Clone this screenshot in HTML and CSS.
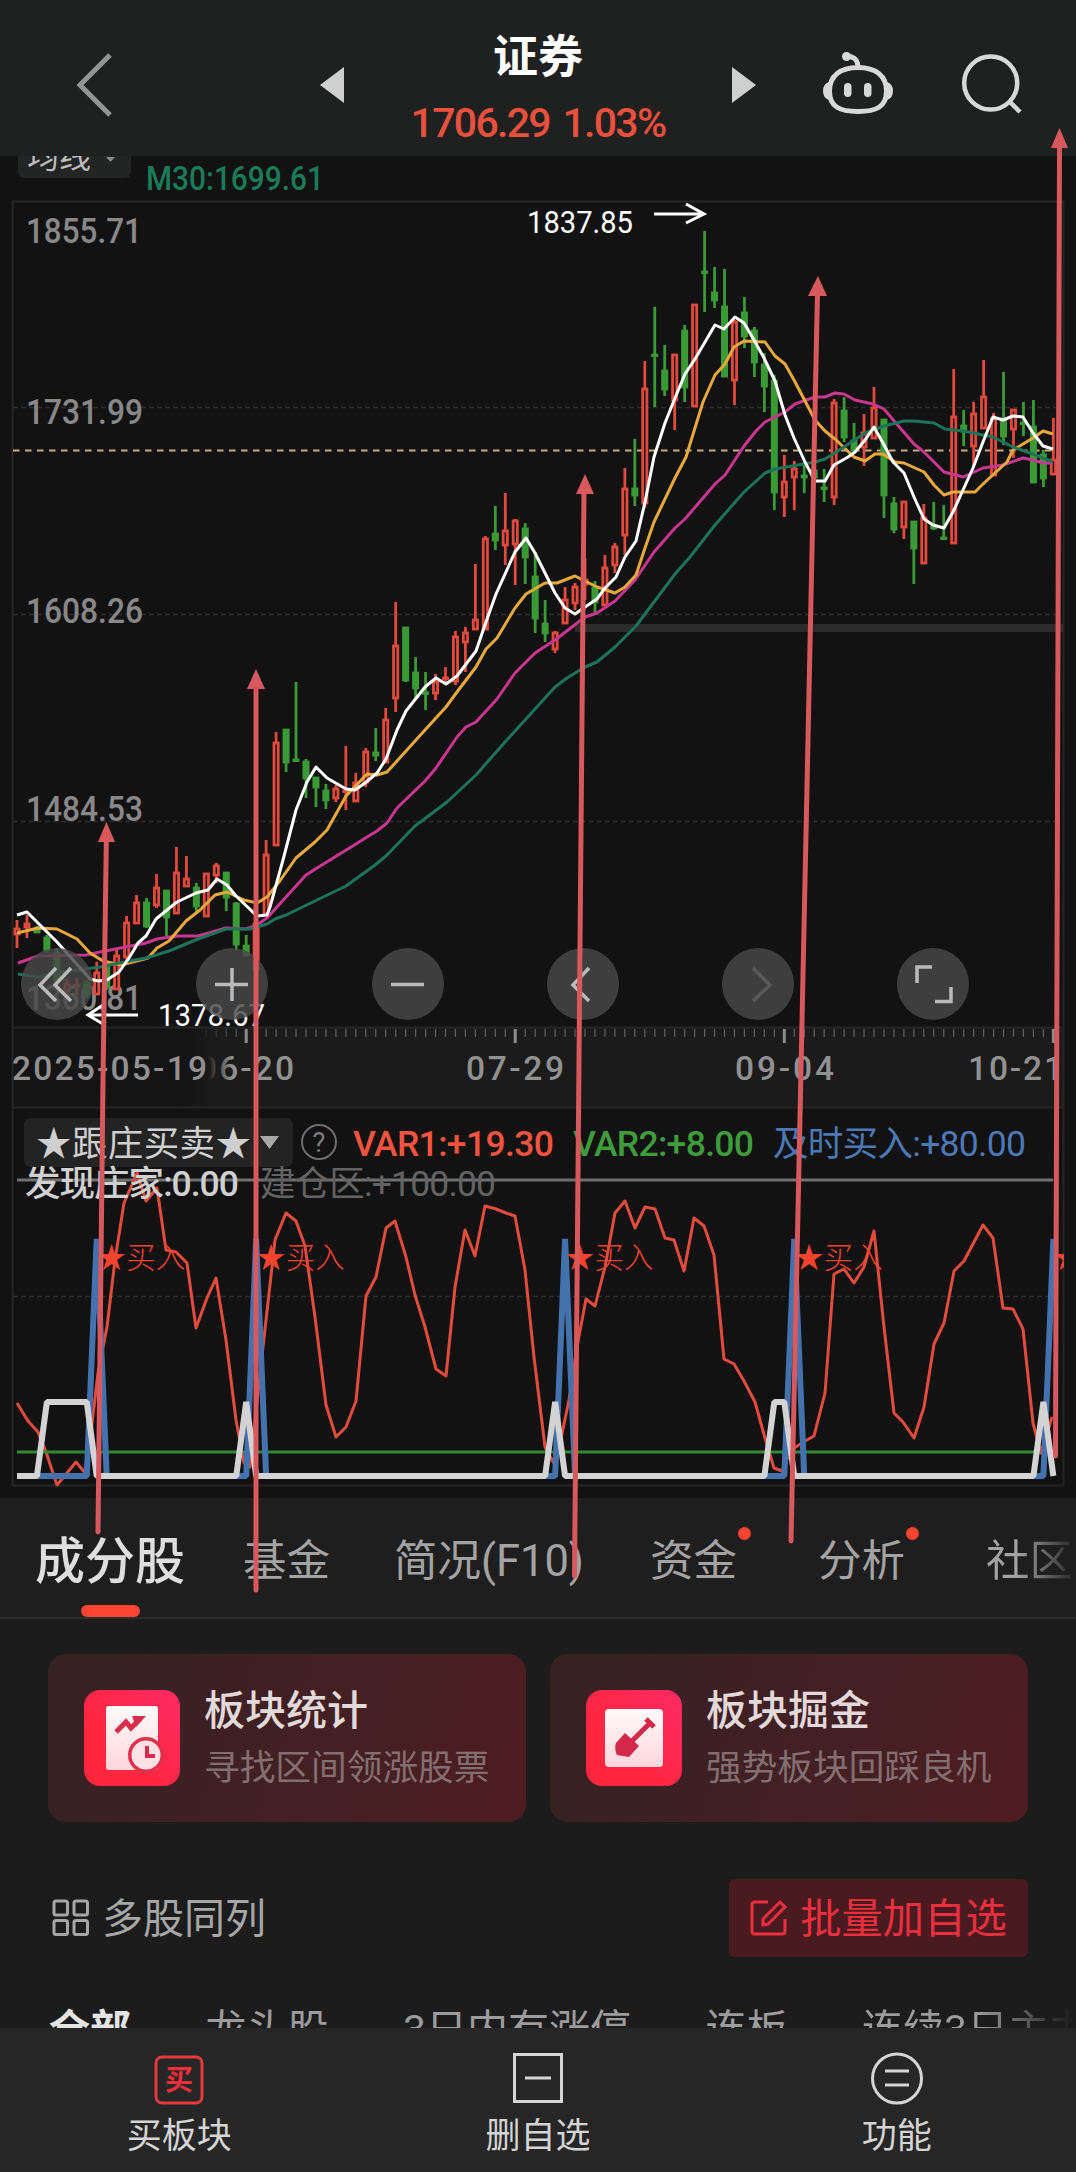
FILE: index.html
```
<!DOCTYPE html>
<html lang="zh-CN">
<head>
    <meta charset="UTF-8">
    <meta name="viewport" content="width=device-width, initial-scale=1.0">
    <title>证券 板块行情</title>
    <link rel="stylesheet" href="styles.css">
</head>
<body>
    <header class="top-bar">
        <svg class="back" width="40" height="66" viewBox="0 0 40 66"><path d="M35 3L5 33L35 63"/></svg>
        <svg class="switch" width="24" height="36" viewBox="0 0 24 36"><path d="M24 0V36L0 18Z"/></svg>
        <div class="quote">
            <h1>证券</h1>
            <div class="price">1706.29 1.03%</div>
        </div>
        <svg class="switch" width="24" height="36" viewBox="0 0 24 36"><path d="M0 0V36L24 18Z"/></svg>
        <svg class="robot" width="70" height="66" viewBox="823 50 70 66">
            <path d="M858 67.500C876 67.500 886.500 76 886.500 91C886.500 107 876 111.500 858 111.500C840 111.500 829.500 107 829.500 91C829.500 76 840 67.500 858 67.500Z"/>
            <path d="M858 68C858 60 855 57 847 56"/>
            <circle class="fill" cx="846.5" cy="56.5" r="4.5"/>
            <path class="fill" d="M829 82q-6 2-6 9t6 9zM887 82q6 2 6 9t-6 9z"/>
            <rect class="fill" x="844" y="83" width="7.5" height="14" rx="3.7"/>
            <rect class="fill" x="864" y="83" width="7.5" height="14" rx="3.7"/>
        </svg>
        <svg class="search" width="62" height="62" viewBox="961 53 62 62"><circle cx="990.7" cy="83" r="26.5"/><path d="M1009 101L1020 112"/></svg>
    </header>

    <section class="chart">
        <svg id="chart" width="1076" height="1342" viewBox="0 156 1076 1342">
            <!-- average line selector, partly scrolled under the header -->
            <rect x="18" y="140" width="113" height="38" rx="6" fill="#232424"/>
            <text x="27" y="168" class="cjk" font-size="32" fill="#bdbdbd">均线</text>
            <path d="M106 157h9l-4.500 5z" fill="#8a8a8a"/>
            <text x="146" y="190" font-size="34" font-weight="500" fill="#1a7b58" textLength="178" lengthAdjust="spacingAndGlyphs">M30:1699.61</text>

            <rect x="13" y="1028" width="1050" height="79" fill="#1b1b1b"/>
            <rect x="13" y="1028" width="200" height="82" fill="url(#fade)"/>
            <defs>
                <linearGradient id="fade"><stop offset="0.3" stop-color="#141414"/><stop offset="0.85" stop-color="#131313"/><stop offset="1" stop-color="#131313" stop-opacity="0"/></linearGradient>
                <clipPath id="panel"><rect x="13" y="1108" width="1051" height="378"/></clipPath>
                <linearGradient id="dateFade"><stop offset="0.1" stop-color="#919191" stop-opacity="0"/><stop offset="0.35" stop-color="#919191"/></linearGradient>
            </defs>

            <g class="frame">
                <path d="M12 201.500H1064M12 1027.500H1064M12 1107.500H1064M12 1485.500H1064M12.500 201V1486M1063.500 201V1486"/>
            </g>
            <path class="grid" d="M13 407.500H1056M13 614.500H1056M13 821.500H1056M13 1296.500H1058"/>
            <rect x="575" y="624" width="489" height="8" fill="#2b2b2b"/>

            <g class="scale">
                <text x="26" y="243" textLength="116" lengthAdjust="spacingAndGlyphs">1855.71</text>
                <text x="26" y="424" textLength="117" lengthAdjust="spacingAndGlyphs">1731.99</text>
                <text x="26" y="623" textLength="117" lengthAdjust="spacingAndGlyphs">1608.26</text>
                <text x="26" y="821" textLength="117" lengthAdjust="spacingAndGlyphs">1484.53</text>
                <text x="26" y="1010" textLength="116" lengthAdjust="spacingAndGlyphs">1360.81</text>
            </g>
            <path d="M13 450.500H1056" stroke="#c9ab7c" stroke-width="2" stroke-dasharray="6.500 5.500"/>

            <g id="candles"></g>
            <g id="averages"></g>

            <g class="peak">
                <text x="527" y="233" textLength="106" lengthAdjust="spacingAndGlyphs">1837.85</text>
                <path d="M654 214H703M686 204L704 214L686 223"/>
                <text x="158" y="1026" textLength="107" lengthAdjust="spacingAndGlyphs">1378.67</text>
                <path d="M138 1015H88M103 1005L88 1015L103 1024"/>
            </g>

            <g id="ticks"></g>
            <g class="dates">
                <text x="12" y="1080" textLength="195">2025-05-19</text>
                <text x="198" y="1080" textLength="96" fill="url(#dateFade)">06-20</text>
                <text x="466" y="1080" textLength="98">07-29</text>
                <text x="735" y="1080" textLength="99">09-04</text>
                <text x="968" y="1080" textLength="95">10-21</text>
            </g>

            <g clip-path="url(#panel)">
                <path d="M17 1180H1053" stroke="#707070" stroke-width="3"/>
                <g id="indicator"></g>
                <g id="signals"></g>
            </g>

            <rect x="24" y="1118" width="269" height="49" rx="7" fill="#232323"/>
            <g class="legend">
                <text x="36" y="1156" fill="#cfcfcf" textLength="215">★跟庄买卖★</text>
                <path d="M260 1136H279L269.500 1149Z" fill="#a8a8a8"/>
                <circle cx="319" cy="1142" r="17" fill="none" stroke="#6e6e6e" stroke-width="2"/>
                <text x="319" y="1152" font-size="27" text-anchor="middle" fill="#7c7c7c">?</text>
                <text x="353" y="1156" class="bold" fill="#f2543f" textLength="201">VAR1:+19.30</text>
                <text x="573" y="1156" class="bold" fill="#3f9c3b" textLength="181">VAR2:+8.00</text>
                <text x="773" y="1156" fill="#4c79b6" textLength="253">及时买入:+80.00</text>
                <text x="25" y="1196" class="bold" fill="#d0d0d0" textLength="214">发现庄家:0.00</text>
                <text x="260" y="1196" fill="#636363" textLength="236">建仓区:+100.00</text>
            </g>
        </svg>
        <div class="tools">
            <button><svg viewBox="0 0 72 72"><path d="M35 20L19 37L35 53M50 20L34 37L50 53"/></svg></button>
            <button><svg viewBox="0 0 72 72"><path d="M36 20V53M19 36.500H52"/></svg></button>
            <button><svg viewBox="0 0 72 72"><path d="M19 36.500H52"/></svg></button>
            <button><svg viewBox="0 0 72 72"><path d="M42 20L26 37L42 53"/></svg></button>
            <button class="disabled"><svg viewBox="0 0 72 72"><path d="M31 20L48 37L31 53"/></svg></button>
            <button><svg viewBox="0 0 72 72"><path d="M35 19H20V35M54 39V53.500H38"/></svg></button>
        </div>
    </section>

    <nav class="tabs">
        <a class="active">成分股</a>
        <a>基金</a>
        <a>简况(F10)</a>
        <a class="dot">资金</a>
        <a class="dot">分析</a>
        <a class="cut">社区</a>
    </nav>

    <main>
        <div class="cards">
            <div class="card">
                <svg width="96" height="96" viewBox="0 0 96 96">
                    <defs>
                        <linearGradient id="red" x1="0" y1="1" x2="1" y2="0"><stop offset="0.3" stop-color="#ff263d"/><stop offset="1" stop-color="#fb2a63"/></linearGradient>
                        <linearGradient id="paper" x2="0" y2="1"><stop offset="0" stop-color="#fffafa"/><stop offset="1" stop-color="#ffd6dc"/></linearGradient>
                    </defs>
                    <rect width="96" height="96" rx="16" fill="url(#red)"/>
                    <rect x="22" y="16" width="52" height="64" rx="3" fill="url(#paper)"/>
                    <path d="M32 42L42 32L47 38L56 29" fill="none" stroke="#d92c4a" stroke-width="5"/>
                    <path d="M48 26H62L52 37Z" fill="#d92c4a"/>
                    <circle cx="62" cy="65" r="16" fill="#ffe1e5" stroke="#e0304b" stroke-width="4"/>
                    <path d="M73 46A20 20 0 0 1 73 82H80V46Z" fill="#ff2749"/>
                    <circle cx="62" cy="65" r="14.500" fill="#ffe1e5"/>
                    <path d="M63 56V66H71" fill="none" stroke="#d92c4a" stroke-width="4"/>
                </svg>
                <div class="card-text">
                    <h2>板块统计</h2>
                    <p>寻找区间领涨股票</p>
                </div>
            </div>
            <div class="card">
                <svg width="96" height="96" viewBox="0 0 96 96">
                    <rect width="96" height="96" rx="16" fill="url(#red)"/>
                    <rect x="19" y="19" width="58" height="58" rx="4" fill="url(#paper)"/>
                    <path d="M60 29L68 37M64 33L46 51" fill="none" stroke="#d4284a" stroke-width="5"/>
                    <path d="M39 43L53 56L43 67L31 65Q28 58 30 53Z" fill="#d4284a"/>
                </svg>
                <div class="card-text">
                    <h2>板块掘金</h2>
                    <p>强势板块回踩良机</p>
                </div>
            </div>
        </div>

        <div class="actions">
            <div class="multi">
                <svg width="38" height="38" viewBox="0 0 38 38"><rect x="2" y="2" width="13.500" height="14" rx="2"/><rect x="22" y="2" width="13.500" height="14" rx="2"/><rect x="2" y="21.500" width="13.500" height="14" rx="2"/><rect x="22" y="21.500" width="13.500" height="14" rx="2"/></svg>
                <span>多股同列</span>
            </div>
            <button class="batch">
                <svg width="38" height="38" viewBox="0 0 38 38"><path d="M18 3H5Q2 3 2 6V32Q2 35 5 35H32Q35 35 35 32V20"/><path d="M13 26V20L30 3L35 8L18 25Z"/></svg>
                <span>批量加自选</span>
            </button>
        </div>

        <div class="filters">
            <span class="active">全部</span>
            <span>龙头股</span>
            <span>3日内有涨停</span>
            <span>连板</span>
            <span>连续3日主力</span>
        </div>
    </main>

    <footer class="bottom-nav">
        <a>
            <svg width="54" height="54" viewBox="0 0 54 54"><rect class="buy" x="4" y="5" width="46" height="46" rx="6"/><text x="27" y="38" text-anchor="middle">买</text></svg>
            买板块
        </a>
        <a>
            <svg width="54" height="54" viewBox="0 0 54 54"><rect x="3.500" y="2.500" width="47" height="47"/><path d="M14 26H40"/></svg>
            删自选
        </a>
        <a>
            <svg width="54" height="54" viewBox="0 0 54 54"><circle cx="27" cy="26.500" r="24.500"/><path d="M15 19H39M15 33H39"/></svg>
            功能
        </a>
    </footer>

    <svg class="marks" width="1076" height="2172" viewBox="0 0 1076 2172">
        <path d="M106.400 835L103 1080L98 1532M256 685V1590M584 490L574.500 1576M817.500 292L791 1541M1059.500 145L1055.500 1456"/>
        <path class="head" d="M106.400 822L115 842H98ZM256 669L265 689H247ZM585 474L594 494H576ZM818 276L827 296H808ZM1059.500 128L1068 148H1051Z"/>
    </svg>

    <script src="script.js"></script>
</body>
</html>
```
FILE: styles.css
```
* {
    box-sizing: border-box;
}
body {
    margin: 0;
    width: 1076px;
    height: 2172px;
    overflow: hidden;
    position: relative;
    display: flex;
    flex-direction: column;
    background-color: #1c1c1c;
    color: #d6d6d6;
    font-family: Roboto, 'Noto Sans CJK SC', sans-serif;
}
button {
    font-family: inherit;
    border: none;
    padding: 0;
}
h1, h2, p {
    margin: 0;
}

/* header */
.top-bar {
    height: 156px;
    flex: none;
    display: flex;
    align-items: flex-start;
    background-color: #1f2120;
    padding-left: 75px;
}
.top-bar svg {
    flex: none;
    fill: none;
    stroke: #d8d8d8;
    stroke-width: 5;
}
.top-bar .back {
    margin: 52px 205px 0 0;
    stroke: #949494;
}
.top-bar .switch {
    margin-top: 67px;
    fill: #cfcfcf;
    stroke: none;
}
.top-bar .robot {
    margin: 50px 0 0 67px;
}
.top-bar .robot .fill {
    fill: #d8d8d8;
    stroke: none;
}
.top-bar .search {
    margin: 53px 0 0 68px;
    stroke-width: 4.5;
}
.quote {
    width: 388px;
    text-align: center;
    padding-top: 28px;
}
.quote h1 {
    font-size: 45px;
    line-height: 60px;
    font-weight: 600;
    color: #fff;
}
.price {
    margin-top: 11px;
    font-size: 41px;
    line-height: 48px;
    font-weight: 500;
    letter-spacing: -1.7px;
    word-spacing: 4px;
    white-space: nowrap;
    color: #e9503d;
}

/* chart */
.chart {
    position: relative;
    height: 1342px;
    flex: none;
    background-color: #121212;
}
#chart {
    display: block;
}
#chart text {
    font-family: Roboto, 'Noto Sans CJK SC', sans-serif;
}
.frame {
    fill: none;
    stroke: #262626;
    stroke-width: 2;
}
.grid {
    stroke: #2d2d2d;
    stroke-width: 1.3;
    stroke-dasharray: 5 3;
}
.scale {
    fill: #888;
    font-size: 35px;
    font-weight: 500;
}
.dates {
    fill: #919191;
    font-size: 33.5px;
    font-weight: 500;
}
.peak {
    fill: #fff;
    font-size: 32px;
}
.peak path {
    fill: none;
    stroke: #fff;
    stroke-width: 3;
}
.legend {
    font-size: 35.5px;
}
.legend .bold {
    font-weight: 500;
}
.candle {
    stroke-width: 2.8;
}
.up {
    fill: #121212;
    stroke: #e14a3c;
}
.down {
    fill: #3a9a36;
    stroke: #3a9a36;
}
.line {
    fill: none;
    stroke-width: 3;
    stroke-linejoin: round;
}
.line.thick {
    stroke-width: 6;
    stroke-linejoin: bevel;
}
.signal {
    fill: #f4442f;
    font-size: 29.5px;
    font-weight: 300;
}
.tools {
    position: absolute;
    left: 21px;
    top: 792px;
    display: flex;
    gap: 103.3px;
}
.tools button {
    width: 72px;
    height: 72px;
    border-radius: 50%;
    background-color: rgba(72, 72, 72, 0.82);
}
.tools svg {
    display: block;
    fill: none;
    stroke: #bababa;
    stroke-width: 3.5;
}
.tools .disabled svg {
    stroke: #595959;
}

/* tabs */
.tabs {
    height: 121px;
    flex: none;
    display: flex;
    align-items: center;
    padding: 0 0 1px 35px;
    background-color: #1e1e1e;
    border-bottom: 2px solid #2d2d2d;
    font-size: 43.5px;
    color: #a3a3a3;
    white-space: nowrap;
}
.tabs a {
    position: relative;
    margin-right: 64px;
}
.tabs .active {
    font-size: 50px;
    font-weight: 500;
    color: #dedede;
    margin-right: 58px;
}
.tabs .active::after {
    content: '';
    position: absolute;
    left: 46px;
    bottom: -24px;
    width: 59px;
    height: 12px;
    border-radius: 6px;
    background-color: #fb4431;
}
.tabs .dot {
    margin-right: 81px;
}
.tabs a:nth-child(3) {
    margin-right: 66px;
}
.tabs .dot::after {
    content: '';
    position: absolute;
    right: -14px;
    top: 1px;
    width: 13px;
    height: 13px;
    border-radius: 50%;
    background-color: #fb4431;
}
.tabs .cut {
    margin-right: 0;
    color: transparent;
    background: linear-gradient(90deg, #a3a3a3 35%, #2a2a2a 100%);
    -webkit-background-clip: text;
    background-clip: text;
}

/* content */
main {
    flex: 1;
    min-height: 0;
    overflow: hidden;
    padding: 35px 48px 0;
}
.cards {
    display: flex;
    gap: 24px;
}
.card {
    flex: 1;
    height: 168px;
    display: flex;
    align-items: center;
    gap: 24px;
    padding-left: 36px;
    border-radius: 18px;
    background: linear-gradient(110deg, #352123 0%, #432024 55%, #4e1c20 100%);
}
.card h2 {
    margin-top: 2px;
    font-size: 41px;
    line-height: 56px;
    font-weight: 500;
    color: #e2d9da;
}
.card p {
    margin-top: 2px;
    font-size: 35.7px;
    line-height: 54px;
    color: #836f71;
}
.actions {
    display: flex;
    justify-content: space-between;
    align-items: center;
    margin-top: 57px;
    height: 78px;
}
.actions svg {
    fill: none;
    stroke-width: 3;
}
.actions span {
    margin-top: -7px;
}
.multi {
    display: flex;
    align-items: center;
    gap: 12px;
    padding-left: 4px;
    font-size: 41px;
    color: #a6a6a6;
}
.multi svg {
    stroke: #a6a6a6;
}
.batch {
    display: flex;
    align-items: center;
    justify-content: center;
    gap: 12px;
    width: 299px;
    height: 78px;
    border-radius: 6px;
    background-color: #491b20;
    color: #eb2f3e;
    font-size: 41.3px;
}
.batch svg {
    stroke: #eb2f3e;
}
.filters {
    display: flex;
    gap: 74.5px;
    width: 1200px;
    margin-top: 43px;
    padding-left: 1px;
    font-size: 41px;
    line-height: 60px;
    white-space: nowrap;
    color: #9c9c9c;
}
.filters .active {
    color: #e4e4e4;
    font-weight: 700;
}
.filters span:last-child {
    color: transparent;
    background: linear-gradient(90deg, #9c9c9c 50%, #1c1c1c 92%);
    -webkit-background-clip: text;
    background-clip: text;
}

/* bottom navigation */
.bottom-nav {
    height: 144px;
    flex: none;
    display: flex;
    background-color: #262626;
}
.bottom-nav a {
    flex: 1;
    display: flex;
    flex-direction: column;
    align-items: center;
    padding-top: 24px;
    font-size: 35px;
    line-height: 52px;
    color: #d4d4d4;
}
.bottom-nav svg {
    fill: none;
    stroke: #d4d4d4;
    stroke-width: 3;
    margin-bottom: 5px;
}
.bottom-nav .buy {
    stroke: #e03a3e;
}
.bottom-nav text {
    fill: #ee2f3c;
    stroke: none;
    font-size: 28px;
    font-weight: 700;
}

/* hand drawn arrows over the whole page */
.marks {
    position: absolute;
    left: 0;
    top: 0;
    pointer-events: none;
    fill: none;
    stroke: #d7595e;
    stroke-width: 5;
    stroke-linecap: round;
}
.marks .head {
    fill: #d7595e;
    stroke: none;
}
```
FILE: script.js
```
const SVG = 'http://www.w3.org/2000/svg';
const STEP = 9.965;
const barX = i => 17 + i * STEP;

// direction, high, body top, body bottom, low
const candles = [
    ['u', 920, 928, 935, 948], ['u', 915, 923, 928, 938], ['d', 926, 928, 933, 933], ['d', 935, 937, 951, 953],
    ['d', 948, 952, 982, 984], ['u', 979, 983, 992, 995], ['u', 978, 984, 987, 995], ['d', 980, 982, 995, 998],
    ['u', 962, 972, 995, 995], ['d', 962, 965, 988, 990], ['u', 948, 955, 990, 990], ['u', 916, 922, 958, 960],
    ['u', 895, 902, 924, 924], ['d', 898, 902, 927, 928], ['u', 874, 887, 906, 908], ['d', 890, 890, 918, 936],
    ['u', 847, 872, 914, 914], ['u', 856, 878, 887, 887], ['d', 883, 887, 907, 913], ['u', 873, 873, 917, 917],
    ['u', 863, 865, 876, 883], ['d', 872, 872, 898, 911], ['d', 902, 903, 945, 951], ['d', 935, 945, 956, 956],
    ['u', 923, 923, 970, 970], ['u', 840, 854, 915, 915], ['u', 732, 742, 846, 846], ['d', 729, 729, 763, 772],
    ['d', 682, 759, 761, 762], ['d', 759, 761, 779, 798], ['d', 777, 777, 788, 807], ['d', 784, 790, 801, 809],
    ['u', 785, 788, 799, 802], ['u', 746, 790, 791, 810], ['u', 773, 782, 802, 802], ['u', 748, 751, 783, 787],
    ['d', 728, 752, 756, 761], ['u', 708, 719, 763, 763], ['u', 602, 645, 699, 712], ['d', 627, 627, 681, 682],
    ['d', 657, 672, 689, 698], ['d', 672, 692, 694, 710], ['u', 674, 681, 694, 700], ['u', 667, 677, 679, 685],
    ['u', 631, 636, 682, 685], ['u', 627, 632, 643, 672], ['u', 564, 619, 630, 630], ['u', 536, 538, 630, 630],
    ['d', 506, 533, 541, 550], ['u', 493, 530, 546, 565], ['u', 519, 520, 545, 585], ['d', 523, 528, 558, 584],
    ['d', 552, 576, 619, 633], ['d', 600, 623, 634, 642], ['u', 631, 632, 650, 653], ['u', 587, 599, 624, 624],
    ['u', 583, 586, 604, 610], ['u', 558, 579, 585, 600], ['d', 581, 587, 603, 612], ['u', 555, 567, 606, 606],
    ['u', 543, 546, 566, 573], ['u', 468, 488, 536, 555], ['d', 439, 488, 496, 506], ['u', 361, 388, 504, 508],
    ['d', 307, 354, 356, 407], ['d', 345, 370, 390, 396], ['u', 354, 354, 401, 430], ['d', 325, 330, 388, 402],
    ['u', 304, 304, 407, 407], ['d', 231, 271, 273, 312], ['d', 267, 292, 301, 308], ['d', 269, 306, 377, 377],
    ['u', 320, 321, 381, 405], ['d', 297, 312, 337, 348], ['d', 327, 330, 363, 377], ['d', 353, 364, 387, 412],
    ['d', 375, 380, 493, 510], ['u', 455, 481, 498, 517], ['u', 461, 468, 478, 510], ['d', 462, 475, 478, 493],
    ['d', 467, 470, 478, 485], ['d', 469, 487, 489, 502], ['u', 399, 402, 498, 505], ['d', 397, 410, 438, 442],
    ['d', 423, 440, 451, 451], ['u', 414, 432, 448, 466], ['u', 387, 407, 439, 439], ['d', 419, 419, 496, 518],
    ['d', 497, 503, 530, 533], ['u', 501, 501, 528, 539], ['d', 521, 521, 549, 584], ['u', 504, 517, 564, 564],
    ['d', 502, 525, 529, 530], ['d', 505, 537, 539, 540], ['u', 369, 416, 544, 544], ['d', 410, 425, 432, 446],
    ['u', 402, 413, 447, 467], ['u', 360, 396, 429, 429], ['u', 413, 418, 476, 476], ['d', 372, 418, 437, 445],
    ['u', 409, 409, 430, 458], ['d', 402, 422, 424, 436], ['d', 400, 426, 483, 483], ['d', 450, 454, 479, 487],
    ['u', 418, 459, 475, 475]
];

const averages = {
    '#c7378f': '18,963 38,956 86,955 100,952 146,943 157,939 177,936 198,936 226,928 246,929 257,925 267,918 286,897 306,875 317,868 356,844 367,837 377,831 387,823 397,808 425,781 436,768 457,737 466,727 476,722 497,699 515,673 526,662 535,653 555,640 585,617 597,613 615,601 635,580 654,552 675,528 685,519 715,484 725,475 744,446 756,431 765,422 785,412 795,404 815,397 825,397 835,393 844,394 855,400 873,404 884,409 895,422 914,444 924,452 944,472 963,477 983,468 1003,465 1023,458 1033,460 1043,463 1053,463',
    '#e8a93c': '17,933 38,928 57,929 69,935 77,939 90,953 103,961 121,965 148,958 157,948 169,941 186,921 200,910 215,895 227,892 244,900 257,903 267,897 279,882 296,858 315,842 327,830 346,796 367,774 377,775 387,772 425,730 446,707 457,692 476,667 486,649 497,638 515,608 526,594 545,583 557,583 575,576 585,581 597,587 615,593 625,587 636,575 645,548 654,522 675,478 686,457 703,402 715,375 725,364 734,347 744,341 765,342 775,356 785,364 794,380 815,420 825,431 835,439 854,457 865,461 875,454 883,454 895,462 904,463 924,472 934,485 944,495 953,492 975,492 983,484 995,473 1007,462 1013,450 1033,438 1043,431 1053,434',
    '#1d7359': '18,974 38,977 55,973 100,967 119,963 146,958 169,951 198,939 226,929 250,929 267,924 275,919 286,915 317,900 346,886 375,865 386,856 415,826 447,802 476,775 505,742 526,719 545,698 555,687 567,678 585,667 597,662 615,647 636,626 654,602 675,574 690,557 715,525 744,492 765,473 775,469 815,462 825,459 844,447 865,433 884,426 904,421 914,421 934,423 945,429 963,431 983,435 993,437 1013,447 1033,454 1043,458 1053,462',
    '#ffffff': '17,915 27,912 57,942 90,979 98,981 107,980 119,972 129,958 138,943 146,936 156,919 167,910 177,902 196,893 208,890 217,879 227,885 236,896 257,916 267,915 270,907 283,860 296,810 307,782 316,767 327,778 346,789 355,790 365,783 377,773 386,759 397,730 406,711 425,687 436,678 446,684 457,676 476,651 486,622 496,594 515,552 526,538 535,553 555,593 565,608 575,614 585,607 597,599 605,588 616,577 625,557 636,541 645,502 654,457 665,423 675,398 685,374 695,359 715,325 724,329 735,317 744,323 754,340 764,358 775,381 785,415 794,438 805,462 815,481 825,481 834,465 848,457 855,452 865,440 874,427 883,443 893,462 904,473 914,497 924,519 933,525 944,528 953,512 963,490 973,468 983,442 993,417 1003,420 1013,416 1023,417 1033,433 1043,446 1053,449'
};

const var1 = '17,1403 28,1421 38,1432 46,1452 57,1485 67,1473 76,1462 86,1474 98,1373 107,1327 115,1260 124,1203 137,1173 146,1201 157,1188 166,1250 176,1252 187,1263 196,1328 207,1298 216,1278 226,1340 236,1420 244,1463 250,1467 263,1347 275,1240 286,1213 296,1221 305,1246 315,1317 326,1405 336,1437 346,1427 356,1401 366,1296 376,1277 386,1228 395,1221 406,1257 415,1295 425,1327 436,1369 446,1376 455,1287 465,1230 475,1256 485,1206 496,1209 506,1213 515,1216 525,1270 534,1357 545,1447 553,1462 558,1453 569,1400 577,1347 586,1299 595,1306 605,1267 615,1213 625,1201 635,1228 645,1207 655,1209 665,1238 674,1240 684,1271 694,1218 704,1226 714,1255 724,1359 734,1364 744,1381 755,1402 765,1438 774,1468 782,1471 791,1450 805,1441 814,1436 825,1393 834,1274 844,1269 854,1283 864,1267 874,1231 884,1327 894,1413 903,1422 914,1438 924,1407 934,1344 944,1323 954,1271 964,1261 983,1225 993,1238 1003,1308 1013,1309 1023,1329 1033,1423 1041,1453 1052,1417';

function add(parent, name, attrs, text) {
    const el = document.createElementNS(SVG, name);
    for (const key in attrs) el.setAttribute(key, attrs[key]);
    if (text) el.textContent = text;
    document.getElementById(parent).appendChild(el);
}

candles.forEach(([dir, high, top, bottom, low], i) => {
    const x = barX(i);
    const cls = 'candle ' + (dir === 'u' ? 'up' : 'down');
    add('candles', 'path', { class: cls, d: `M${x} ${high}V${low}` });
    add('candles', 'rect', { class: cls, x: x - 2.1, y: top + 1, width: 4.2, height: Math.max(bottom - top - 2, 0.5) });
});

for (const color in averages) {
    add('averages', 'polyline', { class: 'line', stroke: color, points: averages[color] });
}

// one tick per bar, a tall one under each date
for (let i = 19; i < 105; i++) {
    const major = i % 27 === 23;
    add('ticks', 'path', {
        d: `M${barX(i)} 1029V${major ? 1043 : 1037}`,
        stroke: major ? '#8c8c8c' : '#626262',
        'stroke-width': major ? 3 : 1.2,
        opacity: i < 23 ? (i - 18) / 5 : 1
    });
}

// a pulse returns to the base line one bar before and after its flat top
function pulses(list, peak) {
    const points = list.map(([from, to]) => `${barX(from - 1)},1476 ${barX(from)},${peak} ${barX(to)},${peak} ${barX(to + 1)},1476`);
    return `17,1476 ${points.join(' ')}`;
}

const buys = [8, 24, 55, 78, 104];
add('indicator', 'polyline', { class: 'line', stroke: '#e04c3d', points: var1 });
add('indicator', 'path', { class: 'line', stroke: '#2f8a32', d: 'M17 1452H1040' });
// the last bar has no following one, so its pulse stops at the right edge
add('indicator', 'polyline', { class: 'line thick', stroke: '#4472ad', points: pulses(buys.slice(0, 4).map(i => [i, i]), 1239) + ` ${barX(103)},1476 ${barX(104)},1239` });
add('indicator', 'polyline', { class: 'line thick', stroke: '#d3d3d3', points: pulses([[3, 7], [23, 23], [54, 54], [76, 77], [103, 103]], 1402) });

buys.forEach(i => add('signals', 'text', { class: 'signal', x: barX(i), y: 1268 }, '★买入'));
```
